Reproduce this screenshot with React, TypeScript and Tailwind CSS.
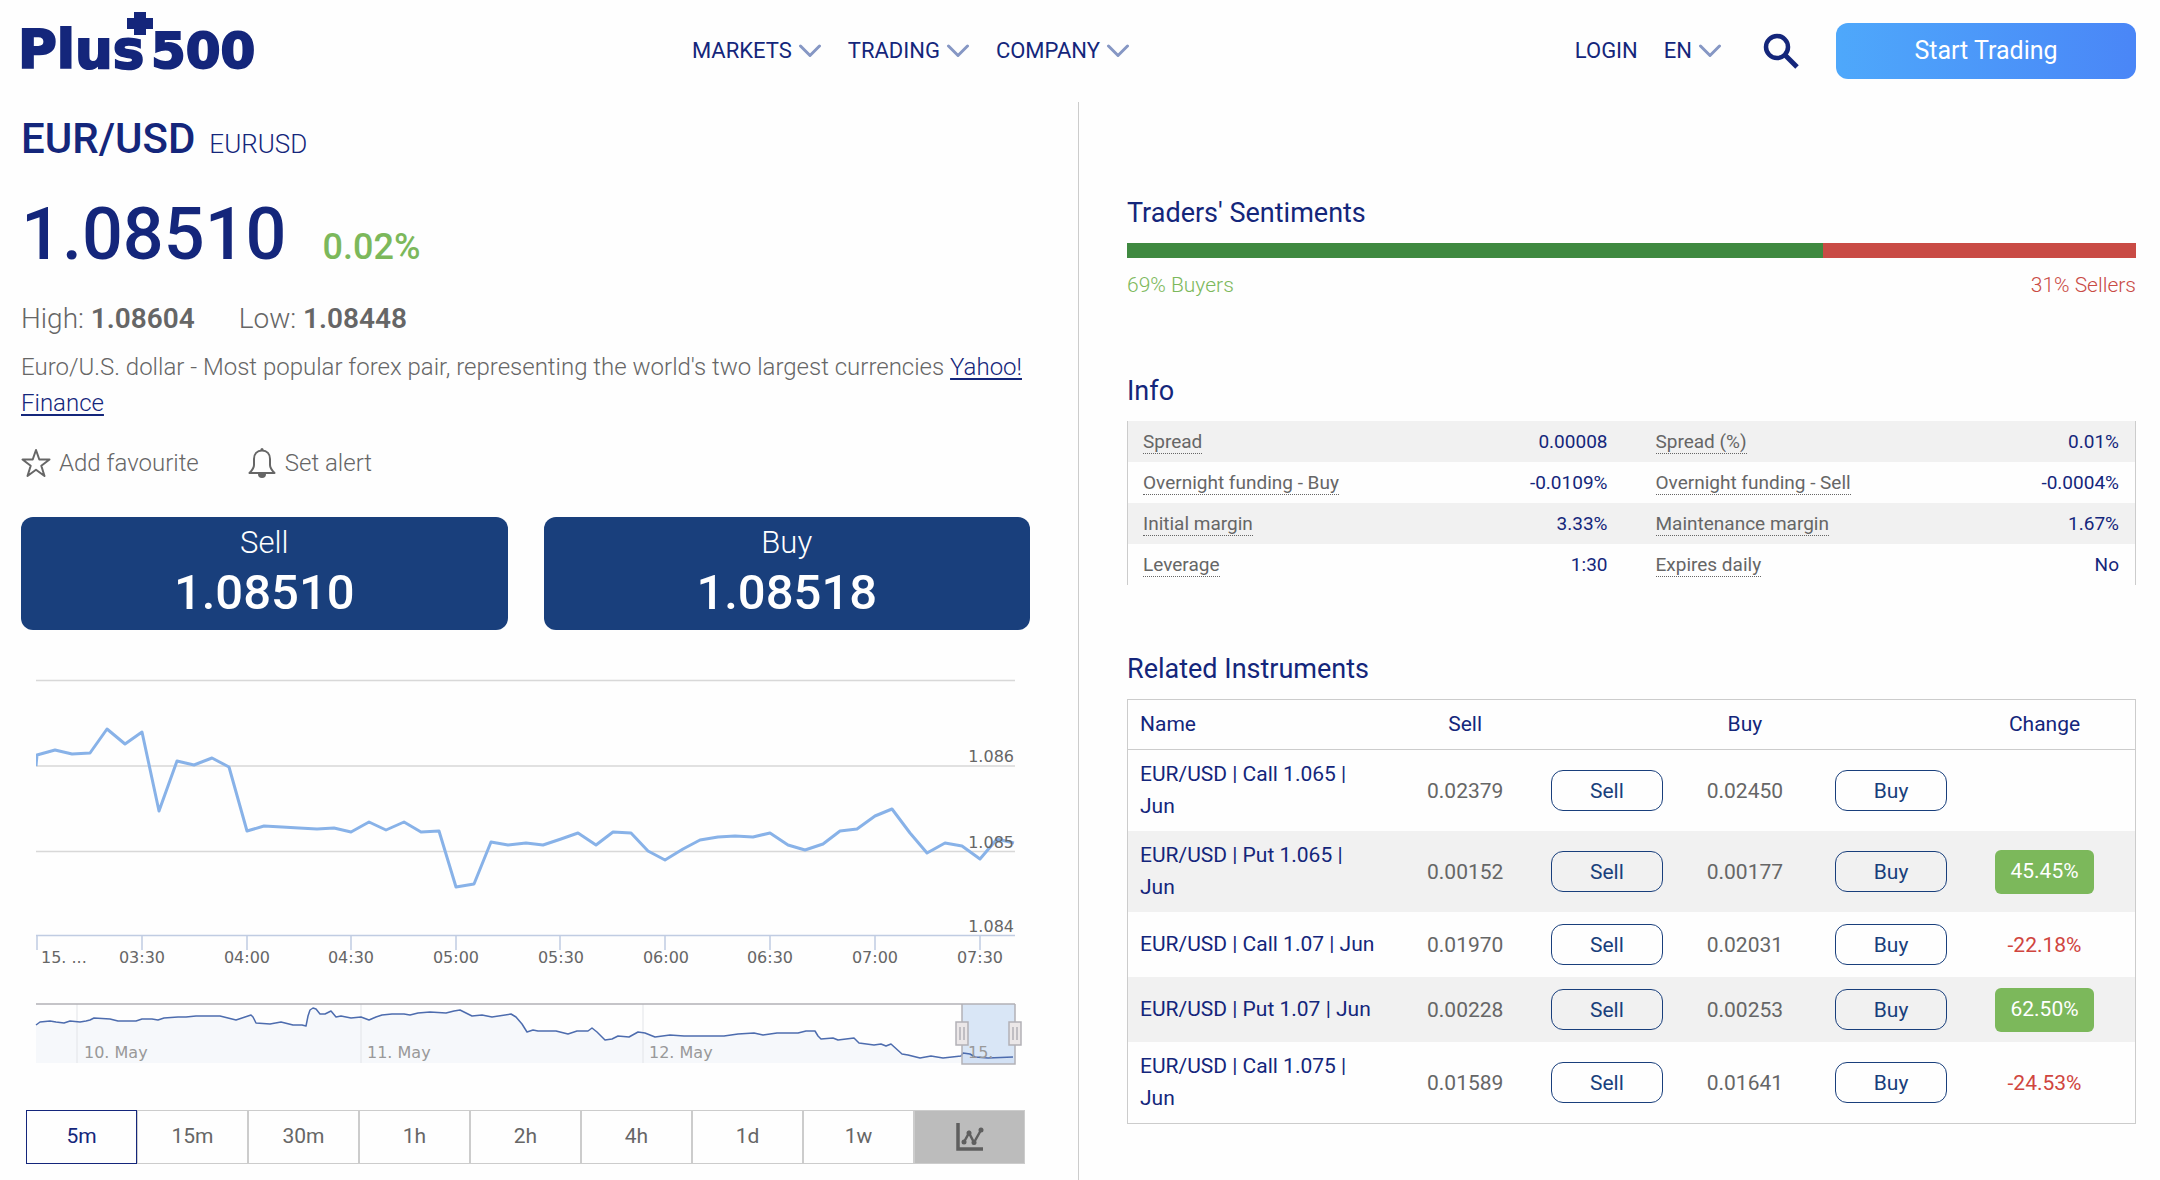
import { useState } from 'react';

const PRICE_POINTS = [
  85, 80, 84, 83, 59, 74, 62, 141, 91, 95, 88, 97, 161, 156, 157, 158, 159, 158, 162, 152, 160, 152, 162, 161, 217,
  214, 172, 175, 173, 175, 169, 163, 175, 162, 163, 181, 190, 179, 170, 167, 166, 167, 163, 175, 180, 174, 161, 159,
  146, 139, 163, 183, 173, 176, 189, 169, 173,
];

const TIME_LABELS = ['03:30', '04:00', '04:30', '05:00', '05:30', '06:00', '06:30', '07:00', '07:30'];

const OVERVIEW_POINTS = [
  [0, 25], [4, 22], [14, 21], [20, 22], [28, 23], [34, 21], [44, 22], [50, 21], [54, 20], [58, 18], [74, 19], [82, 21],
  [100, 21], [106, 19], [116, 19], [122, 20], [128, 18], [142, 17], [150, 17], [160, 16], [171, 16], [184, 16],
  [192, 18], [200, 20], [212, 16], [215, 15], [217, 17], [220, 23], [234, 24], [245, 22], [257, 25], [266, 25],
  [270, 26], [272, 16], [274, 10], [277, 8], [280, 9], [284, 14], [289, 14], [295, 11], [300, 17], [305, 16],
  [315, 18], [325, 17], [333, 20], [340, 17], [346, 15], [356, 14], [368, 14], [374, 15], [382, 13], [394, 12],
  [410, 13], [418, 11], [424, 10], [430, 13], [436, 16], [446, 15], [456, 17], [475, 14], [480, 17], [486, 24],
  [491, 32], [497, 30], [502, 31], [520, 31], [532, 34], [541, 31], [552, 31], [556, 28], [561, 32], [569, 40],
  [576, 39], [582, 36], [593, 37], [602, 32], [609, 33], [619, 37], [634, 35], [648, 36], [668, 36], [688, 36],
  [702, 34], [718, 33], [727, 35], [741, 33], [762, 33], [770, 31], [779, 31], [782, 36], [785, 39], [797, 38],
  [802, 40], [818, 38], [823, 43], [838, 45], [845, 44], [850, 46], [855, 44], [866, 54], [872, 55], [884, 58],
  [895, 56], [907, 58], [925, 56], [927, 53], [934, 54], [939, 57], [952, 58], [977, 57],
];

const INFO_ROWS = [
  ['Spread', '0.00008', 'Spread (%)', '0.01%'],
  ['Overnight funding - Buy', '-0.0109%', 'Overnight funding - Sell', '-0.0004%'],
  ['Initial margin', '3.33%', 'Maintenance margin', '1.67%'],
  ['Leverage', '1:30', 'Expires daily', 'No'],
];

const RELATED = [
  { name: 'EUR/USD | Call 1.065 | Jun', sell: '0.02379', buy: '0.02450', change: '' },
  { name: 'EUR/USD | Put 1.065 | Jun', sell: '0.00152', buy: '0.00177', change: '45.45%' },
  { name: 'EUR/USD | Call 1.07 | Jun', sell: '0.01970', buy: '0.02031', change: '-22.18%' },
  { name: 'EUR/USD | Put 1.07 | Jun', sell: '0.00228', buy: '0.00253', change: '62.50%' },
  { name: 'EUR/USD | Call 1.075 | Jun', sell: '0.01589', buy: '0.01641', change: '-24.53%' },
];

const TIMEFRAMES = ['5m', '15m', '30m', '1h', '2h', '4h', '1d', '1w'];

function Logo() {
  return (
    <svg viewBox="0 0 242 60" className="h-[60px] w-[242px] overflow-visible" fill="#14267b" stroke="#14267b" role="img" aria-label="Plus500">
      <g fontFamily="'DejaVu Sans', sans-serif" fontWeight="700" strokeWidth="2">
        <text x="-3" y="57" fontSize="53">Plus</text>
        <text x="130" y="57" fontSize="50">500</text>
      </g>
      <path d="M113 1h12v6h7v11h-7v6h-12v-6h-7v-11h7z" stroke="none" />
    </svg>
  );
}

function Chevron() {
  return (
    <svg viewBox="0 0 24 14" className="h-[14px] w-6" fill="none" stroke="#8697c4" strokeWidth="3" strokeLinecap="round" strokeLinejoin="round" aria-hidden="true">
      <path d="M2.500 2 12 11.500 21.500 2" />
    </svg>
  );
}

function Header() {
  return (
    <header className="flex h-[102px] items-start justify-between pl-[21px] pr-6 text-[22px] leading-8 text-[#14267b]">
      <a href="#home" className="mt-[11px]">
        <Logo />
      </a>
      <nav className="mt-[35px] mr-4 flex gap-[26px]">
        {['MARKETS', 'TRADING', 'COMPANY'].map((item) => (
          <button key={item} type="button" className="flex items-center gap-[6px]">
            {item}
            <Chevron />
          </button>
        ))}
      </nav>
      <div className="flex items-start">
        <a href="#login" className="mt-[35px]">LOGIN</a>
        <button type="button" className="mt-[35px] ml-[26px] flex items-center gap-[6px]">
          EN
          <Chevron />
        </button>
        <button type="button" aria-label="Search" className="mt-[33px] ml-[41px]">
          <svg viewBox="0 0 36 36" className="size-9" fill="none" stroke="#14267b" aria-hidden="true">
            <circle cx="14" cy="14" r="11" strokeWidth="4.500" />
            <path d="m22 22 12 12" strokeWidth="5" />
          </svg>
        </button>
        <button type="button" className="mt-[23px] ml-[37px] h-14 w-[300px] rounded-xl bg-linear-to-r from-[#4ea8fb] to-[#4a86f7] text-[25px] text-white">
          Start Trading
        </button>
      </div>
    </header>
  );
}

function PriceChart() {
  const line = PRICE_POINTS.map((y, i) => `${Math.round(1.3 + i * 17.45)},${y}`).join(' ');
  return (
    <svg viewBox="0 0 979 300" className="w-full" fontFamily="'DejaVu Sans', sans-serif" fontSize="16" fill="#666">
      <path d="M0 10.500h979M0 96h979M0 181.500h979" stroke="#d8d8d8" strokeWidth="1.500" />
      <path d="M0 265.500h979" stroke="#c0cce2" strokeWidth="1.500" />
      <path d="M1 266v14M106 266v14M211 266v14M315 266v14M420 266v14M524 266v14M629 266v14M734 266v14M839 266v14M944 266v14" stroke="#c0cce2" strokeWidth="1.500" />
      <polyline points={`0,96 ${line}`} fill="none" stroke="#88b2e8" strokeWidth="3" strokeLinejoin="round" />
      <text x="5" y="293">15. ...</text>
      {TIME_LABELS.map((label, i) => (
        <text key={label} x={106 + Math.round(i * 104.7)} y="293" textAnchor="middle">{label}</text>
      ))}
      <g textAnchor="end">
        <text x="978" y="92">1.086</text>
        <text x="978" y="178">1.085</text>
        <text x="978" y="262">1.084</text>
      </g>
    </svg>
  );
}

function Handle({ x }: { x: number }) {
  return (
    <g stroke="#b2b1b6">
      <rect x={x - 6} y="22" width="12" height="23" fill="#ebe7e8" strokeWidth="1.500" />
      <path d={`M${x - 2} 27v13M${x + 2} 27v13`} strokeWidth="1.500" />
    </g>
  );
}

function RangeNavigator() {
  const line = OVERVIEW_POINTS.map(([x, y]) => `${x},${y}`).join(' ');
  return (
    <svg viewBox="0 0 979 68" className="w-full overflow-visible" fontFamily="'DejaVu Sans', sans-serif" fontSize="16" fill="#999">
      <polygon points={`0,63 ${line} 979,63`} fill="#f6f8fb" />
      <path d="M41 4v59M325 4v59M607 4v59" stroke="#e2e4e8" />
      <rect x="926" y="4" width="53" height="60" fill="#6699dd" fillOpacity="0.24" />
      <polyline points={line} fill="none" stroke="#4d6cae" strokeWidth="1.500" strokeLinejoin="round" />
      <text x="48" y="58">10. May</text>
      <text x="331" y="58">11. May</text>
      <text x="613" y="58">12. May</text>
      <text x="932" y="58">15.</text>
      <path d="M0 4h979M926 4v60h53v-60" fill="none" stroke="#b2b1b6" strokeWidth="1.500" />
      <Handle x={926} />
      <Handle x={979} />
    </svg>
  );
}

function TradeButton({ label, price }: { label: string; price: string }) {
  return (
    <button type="button" className="flex h-[113px] flex-1 flex-col items-center gap-1 rounded-xl bg-[#193f7c] pt-2 text-white">
      <span className="text-[31px] leading-9 font-light">{label}</span>
      <span className="text-[49px] leading-[56px] font-medium">{price}</span>
    </button>
  );
}

function Timeframes() {
  const [active, setActive] = useState('5m');
  return (
    <div className="mx-[5px] mt-[42px] flex h-[54px] text-[21px]">
      {TIMEFRAMES.map((frame) => (
        <button
          key={frame}
          type="button"
          onClick={() => setActive(frame)}
          className={`flex-1 border ${frame === active ? 'border-[#14267b] text-[#14267b]' : 'border-[#ccc] text-[#666]'}`}
        >
          {frame}
        </button>
      ))}
      <button type="button" aria-label="Chart type" className="flex flex-1 items-center justify-center border border-[#ccc] bg-[#bcbcbc]">
        <svg viewBox="0 0 28 28" className="size-7" fill="none" stroke="#5f5f5f" aria-hidden="true">
          <path d="M2 0v26H27" strokeWidth="3.500" />
          <path d="m8 19 5-9 5 9.500L25 7" strokeWidth="2.500" />
          <g fill="#5f5f5f" stroke="none">
            <circle cx="8" cy="19" r="2.500" />
            <circle cx="13" cy="10" r="2.500" />
            <circle cx="18" cy="19.500" r="2.500" />
            <circle cx="25" cy="7" r="2.500" />
          </g>
        </svg>
      </button>
    </div>
  );
}

function InstrumentPanel() {
  return (
    <section className="pt-3 pr-12 pb-4 pl-[21px] text-[#666]">
      <h1 className="flex items-baseline gap-[14px] text-[42px] leading-[50px] font-medium text-[#14267b]">
        EUR/USD
        <span className="text-[26px] leading-8 font-light">EURUSD</span>
      </h1>
      <div className="mt-[29px] flex items-baseline gap-9 font-medium">
        <span className="text-[72px] leading-[84px] text-[#14267b]">1.08510</span>
        <span className="text-[36px] leading-10 text-[#7cb85b]">0.02%</span>
      </div>
      <div className="mt-6 flex gap-11 text-[28px] leading-9 font-light">
        <span>High: <b className="font-semibold">1.08604</b></span>
        <span>Low: <b className="font-semibold">1.08448</b></span>
      </div>
      <p className="mt-3 text-[24px] leading-9 font-light">
        Euro/U.S. dollar - Most popular forex pair, representing the world's two largest currencies{' '}
        <a href="#yahoo" className="text-[#14267b] underline decoration-2 underline-offset-3">Yahoo! Finance</a>
      </p>
      <div className="mt-6 flex gap-12 text-[24px] leading-9 font-light">
        <button type="button" className="flex items-center gap-2">
          <svg viewBox="0 0 30 30" className="size-[30px]" fill="none" stroke="#666" strokeWidth="2" strokeLinejoin="round" aria-hidden="true">
            <path d="m15 2 3.300 9.500H28.500l-8.200 6.200 3.200 10.300L15 21.800 6.500 28l3.200-10.300-8.200-6.200h10.200z" />
          </svg>
          Add favourite
        </button>
        <button type="button" className="flex items-center gap-2">
          <svg viewBox="0 0 30 32" className="h-8 w-[30px]" fill="none" stroke="#666" strokeWidth="2" strokeLinejoin="round" aria-hidden="true">
            <path d="M15 3.500c-5 0-8 3.500-8 8.500v6c0 3-1.500 5-4.500 8h25c-3-3-4.500-5-4.500-8v-6c0-5-3-8.500-8-8.500z" />
            <path d="M11 27a4 4 0 0 0 8 0z" fill="#666" stroke="none" />
            <circle cx="15" cy="2.500" r="1.500" fill="#666" stroke="none" />
          </svg>
          Set alert
        </button>
      </div>
      <div className="mt-9 flex gap-9">
        <TradeButton label="Sell" price="1.08510" />
        <TradeButton label="Buy" price="1.08518" />
      </div>
      <div className="mx-[15px] mt-10 flex flex-col gap-[30px]">
        <PriceChart />
        <RangeNavigator />
      </div>
      <Timeframes />
    </section>
  );
}

function Sentiments() {
  const buyers = 69;
  return (
    <div>
      <h2 className="text-[27px] leading-9 text-[#14267b]">Traders' Sentiments</h2>
      <div className="mt-3 flex h-[15px] bg-[#c94b45]">
        <div className="bg-[#3f8940]" style={{ width: `${buyers}%` }} />
      </div>
      <div className="mt-[11px] flex justify-between text-[21px] leading-8 font-light">
        <span className="text-[#7cb85b]">69% Buyers</span>
        <span className="text-[#c94b45]">31% Sellers</span>
      </div>
    </div>
  );
}

function InfoTable() {
  return (
    <div className="mt-[72px]">
      <h2 className="text-[27px] leading-9 text-[#14267b]">Info</h2>
      <table className="mt-3 w-full table-fixed border-x border-[#ccc] text-[19px] leading-6">
        <tbody>
          {INFO_ROWS.map(([label, value, label2, value2]) => (
            <tr key={label} className="h-[41px] odd:bg-[#f1f1f1]">
              <th scope="row" className="pl-[15px] text-left font-normal text-[#666]">
                <span className="border-b border-dotted border-[#666]">{label}</span>
              </th>
              <td className="pr-6 text-right text-[#14267b]">{value}</td>
              <th scope="row" className="pl-6 text-left font-normal text-[#666]">
                <span className="border-b border-dotted border-[#666]">{label2}</span>
              </th>
              <td className="pr-4 text-right text-[#14267b]">{value2}</td>
            </tr>
          ))}
        </tbody>
      </table>
    </div>
  );
}

function Change({ value }: { value: string }) {
  if (!value) return null;
  if (value.startsWith('-')) return <span className="text-[#d0453f]">{value}</span>;
  return <span className="inline-block h-11 rounded-md bg-[#7cb85b] px-[15px] leading-[42px] text-white">{value}</span>;
}

function RelatedTable() {
  const action = 'h-[41px] w-28 rounded-xl border border-[#193f7c] text-[#193f7c]';
  return (
    <div className="mt-[66px]">
      <h2 className="text-[27px] leading-9 text-[#14267b]">Related Instruments</h2>
      <table className="mt-3 w-full table-fixed border border-[#ccc] text-center text-[21px] leading-8 text-[#666]">
        <colgroup>
          <col className="w-[25%]" />
          <col className="w-[17%]" />
          <col className="w-[11%]" />
          <col className="w-[16.5%]" />
          <col className="w-[12.5%]" />
          <col className="w-[18%]" />
        </colgroup>
        <thead>
          <tr className="h-[50px] border-b border-[#ccc] text-[#14267b]">
            <th scope="col" className="pb-[2px] pl-3 text-left font-normal">Name</th>
            <th scope="col" className="pb-[2px] font-normal">Sell</th>
            <td />
            <th scope="col" className="pb-[2px] font-normal">Buy</th>
            <td />
            <th scope="col" className="pb-[2px] font-normal">Change</th>
          </tr>
        </thead>
        <tbody>
          {RELATED.map(({ name, sell, buy, change }) => (
            <tr key={name} className="h-[65px] even:bg-[#f1f1f1]">
              <td className="pt-2 pb-[9px] pl-3 text-left">
                <a href="#instrument" className="text-[#14267b]">{name}</a>
              </td>
              <td>{sell}</td>
              <td><button type="button" className={action}>Sell</button></td>
              <td>{buy}</td>
              <td><button type="button" className={action}>Buy</button></td>
              <td><Change value={change} /></td>
            </tr>
          ))}
        </tbody>
      </table>
    </div>
  );
}

export default function App() {
  return (
    <div className="flex min-h-screen flex-col bg-[#fefefe] font-['Roboto',sans-serif]">
      <Header />
      <main className="grid flex-1 grid-cols-[1078fr_1082fr]">
        <InstrumentPanel />
        <section className="border-l border-[#ccc] pt-[93px] pr-6 pl-12">
          <Sentiments />
          <InfoTable />
          <RelatedTable />
        </section>
      </main>
    </div>
  );
}
